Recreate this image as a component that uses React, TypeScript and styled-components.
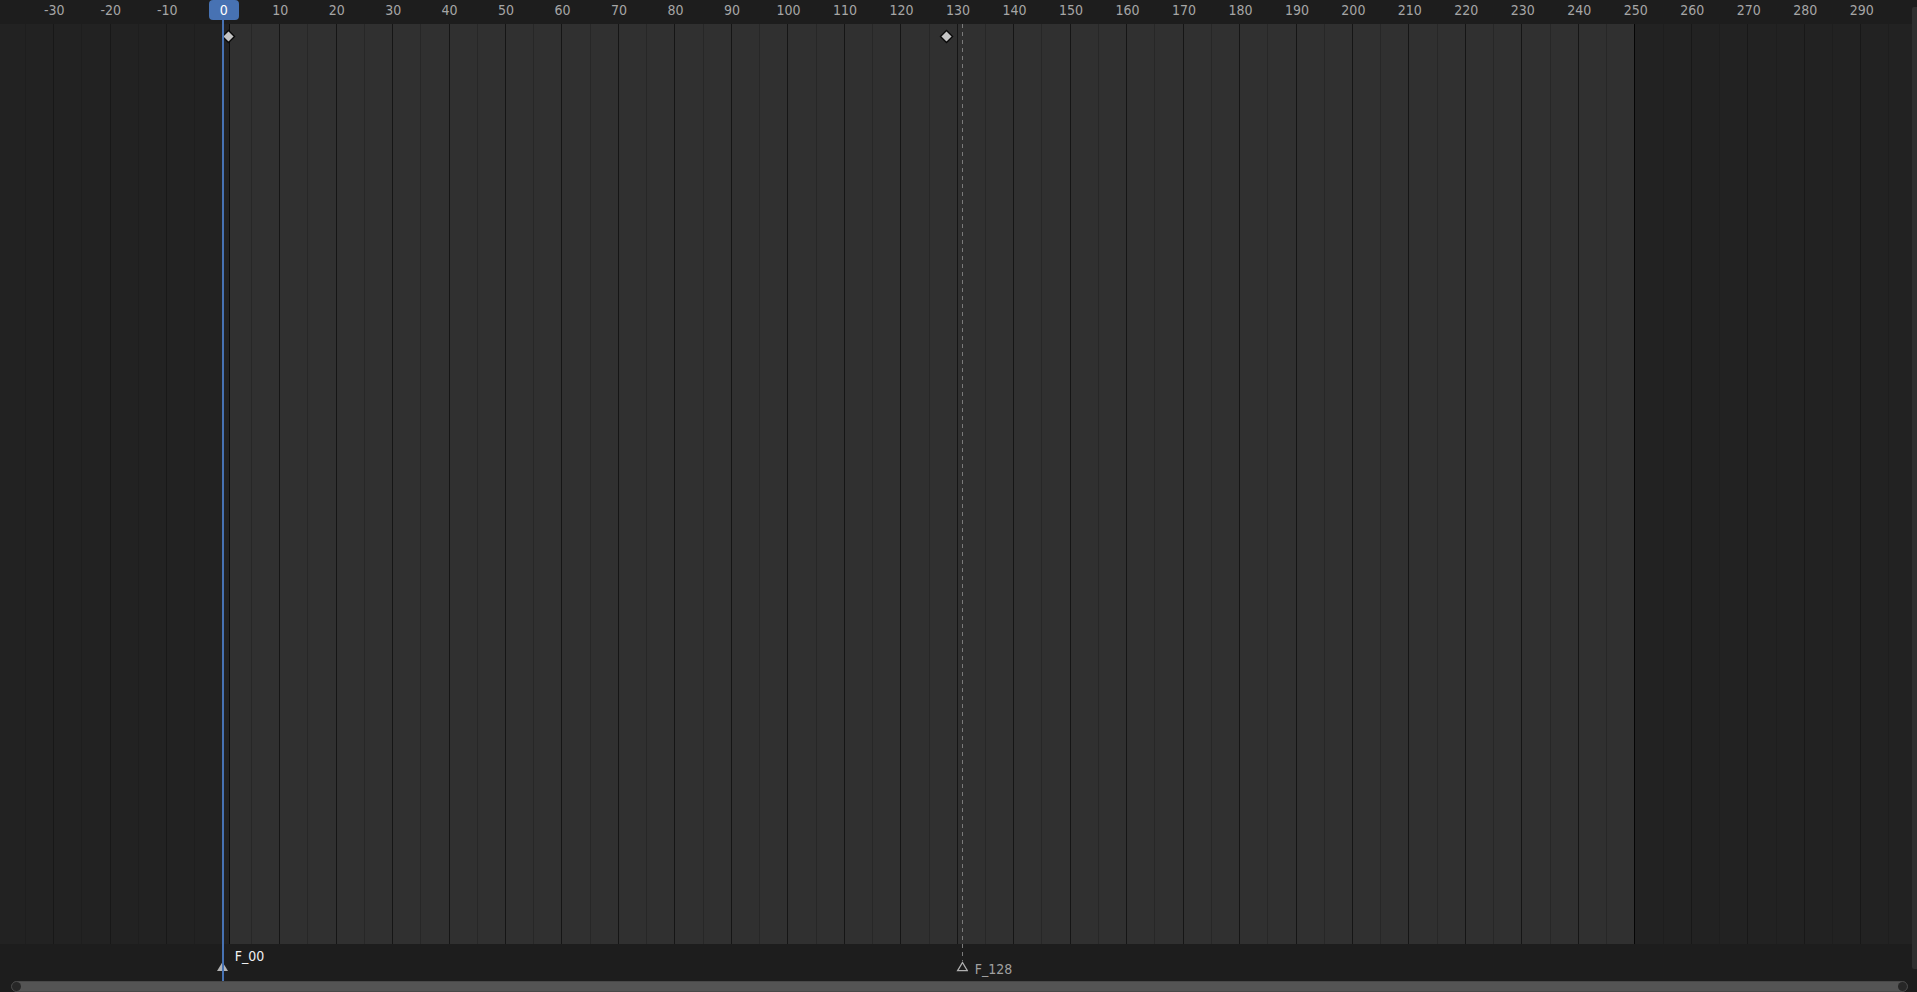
import React from "react";
import styled, { createGlobalStyle, css } from "styled-components";

const FIRST = -35;
const LAST = 295;
const START = 1;
const END = 250;
const CURRENT = 0;

const at = (frame: number) => `${((frame - FIRST) / (LAST - FIRST)) * 100}%`;
const steps = (from: number, to: number, by: number) =>
  Array.from({ length: Math.floor((to - from) / by) + 1 }, (_, i) => from + i * by);

const GlobalStyle = createGlobalStyle`
  * { box-sizing: border-box; }
  body { margin: 0; background: #1d1d1d; }
`;

const Editor = styled.main`
  position: relative;
  display: flex;
  flex-direction: column;
  height: 100vh;
  overflow: hidden;
  background: #1d1d1d;
  color: #a6a6a6;
  font-family: "DejaVu Sans Condensed", "DejaVu Sans", sans-serif;
  font-stretch: condensed;
  font-size: 14px;
  line-height: 20px;
`;

const Ruler = styled.header`
  display: flex;
  height: 24px;
  padding: 0 28px 0 25px;
`;

const Tick = styled.div`
  display: flex;
  flex: 1 1 0;
  justify-content: center;
  padding-left: 2px;
`;

const TickLabel = styled.span<{ $current: boolean }>`
  height: 20px;
  ${(p) =>
    p.$current &&
    css`
      width: 30px;
      border-radius: 4px;
      background: #4772b3;
      color: #ffffff;
      text-align: center;
    `}
`;

const Track = styled.section`
  position: relative;
  display: flex;
  flex: 1;
  padding: 0 28px 0 25px;
  background: #222222;
`;

const Column = styled.div<{ $line: string; $fill: string }>`
  display: flex;
  flex: 1 1 0;
  justify-content: flex-end;
  border-left: 1px solid ${(p) => p.$line};
  background: ${(p) => p.$fill};

  &:last-of-type {
    border-right: 1px solid #1e1e1e;
  }
`;

const RangeStart = styled.div`
  width: 82%;
  border-left: 1px solid #0a0a0a;
  background: #303030;
`;

const Overlay = styled.section`
  position: absolute;
  inset: 0 28px 0 25px;
  pointer-events: none;
`;

const Keyframe = styled.svg<{ $frame: number }>`
  position: absolute;
  top: 5px;
  left: ${(p) => at(p.$frame)};
  width: 15px;
  height: 15px;
  margin-left: -7px;
`;

const MarkerBar = styled.footer`
  position: relative;
  height: 37px;
`;

const Marker = styled.div<{ $frame: number; $active?: boolean }>`
  position: absolute;
  inset: 0 auto 0 ${(p) => at(p.$frame)};
  display: flex;
  align-items: flex-end;
  gap: 7px;
  margin-left: -7px;
  padding-bottom: 9px;
  color: ${(p) => (p.$active ? "#f0f0f0" : "#a0a0a0")};
`;

const MarkerIcon = styled.svg`
  width: 12px;
  height: 11px;
`;

const MarkerName = styled.span<{ $active?: boolean }>`
  align-self: ${(p) => (p.$active ? "flex-start" : "flex-end")};
  margin: ${(p) => (p.$active ? "2px 0 0" : "0 0 -7px")};
`;

const MarkerLine = styled.div<{ $frame: number }>`
  position: absolute;
  inset: 24px auto 31px ${(p) => at(p.$frame)};
  width: 1px;
  margin-left: -1px;
  background: repeating-linear-gradient(#7a7a7a 0 4px, transparent 4px 8px);
`;

const PlayheadLine = styled.div<{ $frame: number }>`
  position: absolute;
  inset: 19px auto 11px ${(p) => at(p.$frame)};
  width: 2px;
  margin-left: -1px;
  background: #4772b3;
`;

const ScrollRow = styled.div`
  display: flex;
  height: 11px;
  padding: 0 9px 0 11px;
`;

const ScrollThumb = styled.div`
  display: flex;
  flex: 1;
  align-items: center;
  justify-content: space-between;
  border: 1px solid #484848;
  border-radius: 6px;
  background: #545454;
`;

const ScrollHandle = styled.span`
  width: 9px;
  height: 9px;
  border-radius: 50%;
  background: #272727;
`;

const VerticalScroll = styled.div`
  position: absolute;
  inset: 7px 0 23px auto;
  width: 5px;
  border-radius: 2px 0 0 2px;
  background: #2f2f2f;
`;

const lineColor = (frame: number) => {
  const major = frame % 10 === 0;
  if (frame === END) return "#050505";
  if (frame > START && frame < END) return major ? "#151515" : "#272727";
  return major ? "#181818" : "#1e1e1e";
};

export default function App() {
  return (
    <>
      <GlobalStyle />
      <Editor>
        <Ruler>
          {steps(-30, 290, 10).map((frame) => (
            <Tick key={frame}>
              <TickLabel $current={frame === CURRENT}>{frame}</TickLabel>
            </Tick>
          ))}
        </Ruler>
        <Track>
          {steps(FIRST, LAST - 5, 5).map((frame) => (
            <Column
              key={frame}
              $line={lineColor(frame)}
              $fill={frame > START && frame < END ? "#303030" : "#222222"}
            >
              {frame === CURRENT && <RangeStart />}
            </Column>
          ))}
          <Overlay>
            {[1, 128].map((frame) => (
              <Keyframe key={frame} $frame={frame} viewBox="0 0 15 15">
                <path d="M7.5 1.5 13.5 7.5 7.5 13.5 1.5 7.5Z" fill="#c4c4c4" stroke="#080808" strokeWidth="1.4" />
              </Keyframe>
            ))}
          </Overlay>
        </Track>
        <MarkerBar>
          <Overlay>
            <Marker $frame={0} $active>
              <MarkerIcon viewBox="0 0 12 11">
                <path d="M6.5 1 12 10H1Z" fill="#b4b4b4" />
              </MarkerIcon>
              <MarkerName $active>F_00</MarkerName>
            </Marker>
            <Marker $frame={131}>
              <MarkerIcon viewBox="0 0 12 11">
                <path d="M6.5 1.5 11.4 9.7H1.6Z" fill="none" stroke="#b0b0b0" strokeWidth="1.3" />
              </MarkerIcon>
              <MarkerName>F_128</MarkerName>
            </Marker>
          </Overlay>
        </MarkerBar>
        <ScrollRow>
          <ScrollThumb>
            <ScrollHandle />
            <ScrollHandle />
          </ScrollThumb>
        </ScrollRow>
        <Overlay>
          <MarkerLine $frame={131} />
          <PlayheadLine $frame={CURRENT} />
        </Overlay>
        <VerticalScroll />
      </Editor>
    </>
  );
}
